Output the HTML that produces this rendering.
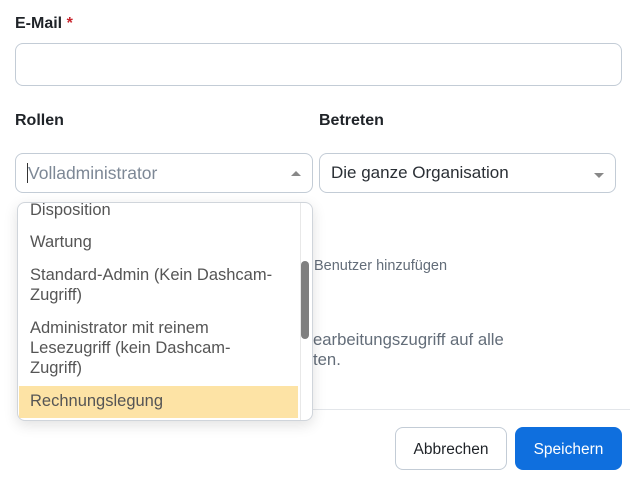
<!DOCTYPE html>
<html><head><meta charset="utf-8"><style>
body{margin:0;width:630px;height:478px;background:#fff;font-family:"Liberation Sans",sans-serif;position:relative;overflow:hidden;color:#1f2328}
.a{position:absolute}
.lbl{font-size:16px;font-weight:bold;color:#1f2328}
.box{border:1px solid #c3ccd6;border-radius:8px;box-sizing:border-box;background:#fff}
.opt{position:absolute;left:12px;font-size:16.5px;color:#555;line-height:20px;white-space:nowrap}
.gray{color:#636d79;font-size:16.7px}
.tri{width:0;height:0;border-left:5px solid transparent;border-right:5px solid transparent}
</style></head><body>
<div class="a lbl" style="left:15px;top:15px">E-Mail <span style="color:#c8232c">*</span></div>
<div class="a box" style="left:15px;top:43px;width:607px;height:43px"></div>
<div class="a lbl" style="left:15px;top:112px">Rollen</div>
<div class="a lbl" style="left:319px;top:112px">Betreten</div>
<div class="a box" style="left:15px;top:153px;width:298px;height:40px"></div>
<div class="a" style="left:27px;top:163px;width:1px;height:20px;background:#333"></div>
<div class="a" style="left:28px;top:163px;font-size:17.5px;color:#7d8896">Volladministrator</div>
<div class="a tri" style="left:291px;top:171px;border-bottom:5px solid #888"></div>
<div class="a box" style="left:319px;top:153px;width:297px;height:40px"></div>
<div class="a" style="left:331px;top:163px;font-size:17px;color:#2a2f35">Die ganze Organisation</div>
<div class="a tri" style="left:594px;top:173px;border-top:5px solid #888"></div>
<div class="a gray" style="left:314px;top:258px;font-size:14.5px">Benutzer hinzufügen</div>
<div class="a gray" style="left:313px;top:330px;line-height:20px">earbeitungszugriff auf alle<br>ten.</div>
<div class="a" style="left:310px;top:409px;width:320px;height:1px;background:#e3e6ea"></div>
<div class="a" style="left:395px;top:427px;width:112px;height:43px;border:1px solid #c3ccd6;border-radius:8px;box-sizing:border-box;font-size:15.5px;text-align:center;line-height:43px">Abbrechen</div>
<div class="a" style="left:515px;top:427px;width:107px;height:43px;background:#0f6fde;border-radius:8px;color:#fff;font-size:15.5px;text-align:center;line-height:45px">Speichern</div>
<div class="a" style="left:17px;top:202px;width:296px;height:219px;border:1px solid #d0d5db;border-radius:8px;box-sizing:border-box;background:#fff;overflow:hidden;box-shadow:0 4px 14px rgba(0,0,0,0.12)">
<div class="opt" style="top:-3px">Disposition</div>
<div class="opt" style="top:29px">Wartung</div>
<div class="opt" style="top:62px">Standard-Admin (Kein Dashcam-<br>Zugriff)</div>
<div class="opt" style="top:115px">Administrator mit reinem<br>Lesezugriff (kein Dashcam-<br>Zugriff)</div>
<div class="a" style="left:1px;top:183px;width:279px;height:32px;background:#fde3a5"></div>
<div class="opt" style="top:188px">Rechnungslegung</div>
<div class="a" style="left:282px;top:0;width:1px;height:219px;background:#e8e8e8"></div>
<div class="a" style="left:283px;top:58px;width:8px;height:78px;background:#7f7f7f;border-radius:4px"></div>
</div>
</body></html>
